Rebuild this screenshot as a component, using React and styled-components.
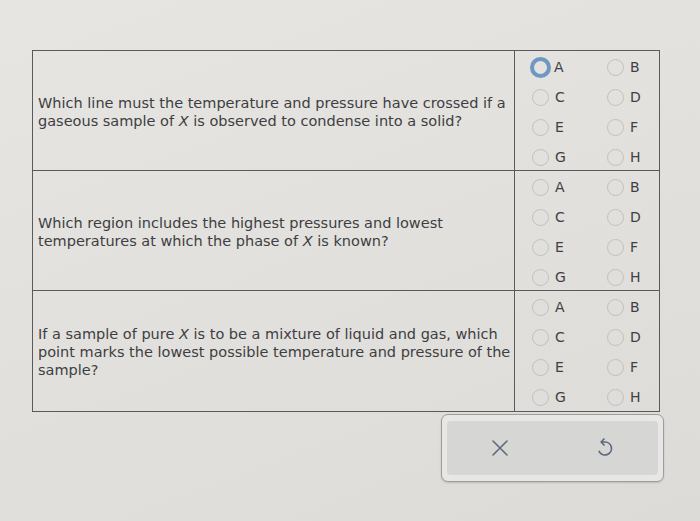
import React from "react";
import styled, { createGlobalStyle } from "styled-components";

const GlobalStyle = createGlobalStyle`
    *, *::before, *::after {
        box-sizing: border-box;
    }
    html, body {
        margin: 0;
        padding: 0;
    }
    body {
        width: 700px;
        height: 521px;
        overflow: hidden;
        background: linear-gradient(160deg, #e6e5e2 0%, #e1e0dd 55%, #dcdbd8 100%);
        font-family: "DejaVu Sans", Verdana, sans-serif;
        color: #3d3d40;
    }
`;

const questions = [
    {
        id: 1,
        text: (
            <>
                Which line must the temperature and pressure have crossed if a
                gaseous sample of <i>X</i> is observed to condense into a solid?
            </>
        ),
        selected: "A",
    },
    {
        id: 2,
        text: (
            <>
                Which region includes the highest pressures and lowest
                temperatures at which the phase of <i>X</i> is known?
            </>
        ),
    },
    {
        id: 3,
        text: (
            <>
                If a sample of pure <i>X</i> is to be a mixture of liquid and
                gas, which point marks the lowest possible temperature and
                pressure of the sample?
            </>
        ),
    },
];

const letters = ["A", "B", "C", "D", "E", "F", "G", "H"];

function App() {
    return (
        <Page>
            <GlobalStyle />
            <Table>
                {questions.map((q, i) => (
                    <Row key={q.id} $last={i === questions.length - 1}>
                        <Question>
                            <p>{q.text}</p>
                        </Question>
                        <Answers>
                            {letters.map((l, idx) => (
                                <Choice key={l} $right={idx % 2 === 1}>
                                    <Radio $on={q.selected === l} />
                                    <span>{l}</span>
                                </Choice>
                            ))}
                        </Answers>
                    </Row>
                ))}
            </Table>

            {/* 하단 버튼 */}
            <ButtonBar>
                <ButtonInner>
                    <IconBtn aria-label="clear">
                        <svg width="20" height="20" viewBox="0 0 20 20">
                            <path
                                d="M3 3 L17 17 M17 3 L3 17"
                                stroke="#5b6b7b"
                                strokeWidth="1.6"
                                strokeLinecap="round"
                            />
                        </svg>
                    </IconBtn>
                    <IconBtn aria-label="undo">
                        <svg width="20" height="22" viewBox="0 0 20 22">
                            <path
                                d="M6.5 5 H10 A6.5 6.5 0 1 1 4.2 14.5"
                                fill="none"
                                stroke="#5b6b7b"
                                strokeWidth="1.7"
                                strokeLinecap="round"
                            />
                            <path
                                d="M9 2 L6.2 5 L9 8"
                                fill="none"
                                stroke="#5b6b7b"
                                strokeWidth="1.7"
                                strokeLinecap="round"
                                strokeLinejoin="round"
                            />
                        </svg>
                    </IconBtn>
                </ButtonInner>
            </ButtonBar>
        </Page>
    );
}

export default App;

const Page = styled.div`
    padding: 50px 0 0 32px;
    display: flex;
    flex-direction: column;
    align-items: flex-start;
`;

const Table = styled.div`
    width: 628px;
    border: 1px solid #5a5a5e;
    border-bottom: none;
`;

const Row = styled.div`
    display: grid;
    grid-template-columns: 482px 1fr;
    height: ${(p) => (p.$last ? "121px" : "120px")};
    border-bottom: 1px solid #5a5a5e;
`;

const Question = styled.div`
    display: flex;
    align-items: center;
    padding: 0 2px 0 5px;
    border-right: 1px solid #5a5a5e;

    p {
        margin: 0;
        font-size: 14.5px;
        line-height: 18px;
        color: #3e3e42;
    }
`;

const Answers = styled.div`
    display: grid;
    grid-template-columns: 74px 1fr;
    grid-template-rows: repeat(4, 30px);
    padding: 1px 0 0 17px;
`;

const Choice = styled.div`
    display: flex;
    align-items: center;
    gap: 6px;
    padding-left: ${(p) => (p.$right ? "1px" : "0")};
    font-size: 14px;
    color: #404044;
`;

const Radio = styled.span`
    width: ${(p) => (p.$on ? "21px" : "17px")};
    height: ${(p) => (p.$on ? "21px" : "17px")};
    border-radius: 50%;
    border: ${(p) => (p.$on ? "4px solid #6f97c4" : "1px solid #c0c0c0")};
    margin-left: ${(p) => (p.$on ? "-2px" : "0")};
    margin-right: ${(p) => (p.$on ? "-3px" : "0")};
    flex-shrink: 0;
`;

const ButtonBar = styled.div`
    margin: 2px 0 0 409px;
    width: 223px;
    height: 68px;
    border: 1px solid #9d9d9d;
    border-radius: 7px;
    background: #e8e7e5;
    padding: 6px 5px;
    box-shadow: 0 1px 2px rgba(0, 0, 0, 0.15);
`;

const ButtonInner = styled.div`
    height: 100%;
    background: #d6d6d5;
    border-radius: 4px;
    display: grid;
    grid-template-columns: 1fr 1fr;
    align-items: center;
`;

const IconBtn = styled.button`
    background: none;
    border: none;
    padding: 0;
    display: flex;
    justify-content: center;
    align-items: center;
    cursor: pointer;
`;
